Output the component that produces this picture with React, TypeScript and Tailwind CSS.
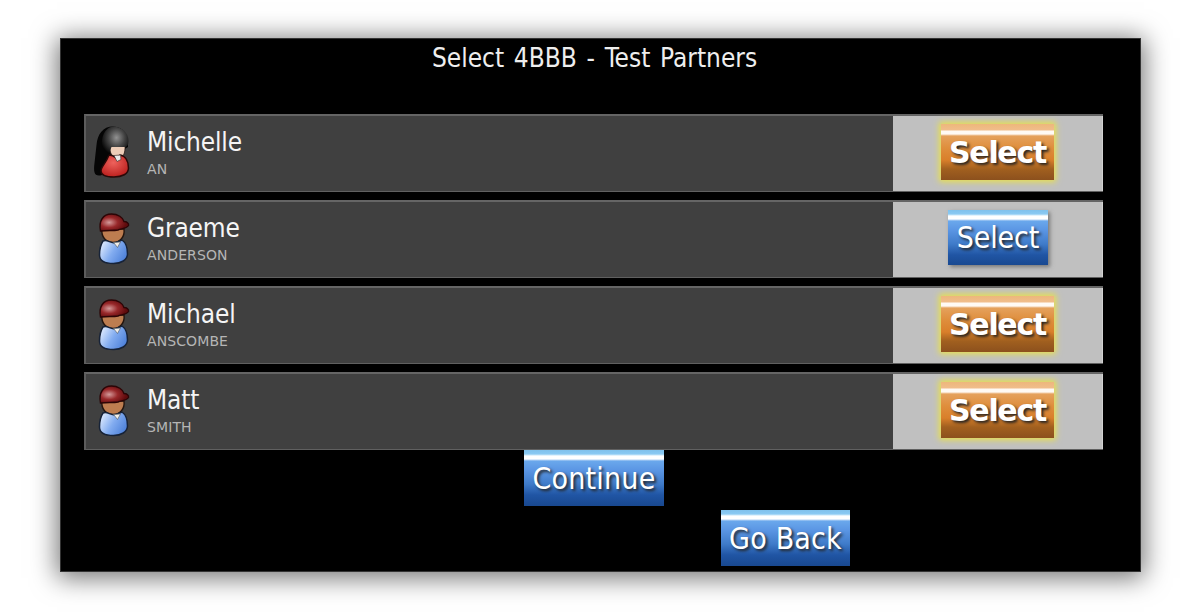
import clsx from 'clsx';

type Player = {
    first: string;
    last: string;
    gender: 'f' | 'm';
    selected: boolean;
};

const players: Player[] = [
    { first: 'Michelle', last: 'AN', gender: 'f', selected: true },
    { first: 'Graeme', last: 'ANDERSON', gender: 'm', selected: false },
    { first: 'Michael', last: 'ANSCOMBE', gender: 'm', selected: true },
    { first: 'Matt', last: 'SMITH', gender: 'm', selected: true },
];

function WomanIcon() {
    return (
        <svg width="40" height="56" viewBox="0 0 40 56" className="block">
            <defs>
                <radialGradient id="hair" cx="0.55" cy="0.38" r="0.6">
                    <stop offset="0" stopColor="#929292" />
                    <stop offset="0.5" stopColor="#454545" />
                    <stop offset="1" stopColor="#050505" />
                </radialGradient>
                <radialGradient id="dress" cx="0.45" cy="0.35" r="0.65">
                    <stop offset="0" stopColor="#ee625c" />
                    <stop offset="1" stopColor="#bd211f" />
                </radialGradient>
            </defs>
            <path d="M20 1.500C10 1.500 4.500 9 3.500 20L1.500 38C0.500 46 1 50.500 6 50.500C14 50.500 22 40 22 30L35 22C36 10 30 1.500 20 1.500Z" fill="#050505" />
            <path d="M17 20H32C32.500 29 30 33 25 33C20 33 16 29 17 20Z" fill="#edcdb8" stroke="#241713" strokeWidth="0.8" />
            <path d="M16 30C19 30 21 31 23 33L27 30C33 31 35.500 37 35.500 43C35.500 49 29 52 21 52C13 52 8 50 8 46C8 42 13 38 16 30Z" fill="url(#dress)" stroke="#2a0908" strokeWidth="1.500" />
            <path d="M21 30.500L24 36.500L28 34.500L27.500 30Z" fill="#e9e9e9" stroke="#453532" strokeWidth="0.7" />
            <path d="M20 1.500C29 1.500 35.500 8 35.500 16C35.500 20 34 22 31 22H18.500C17 25 17 28 15 31C10 28 8 23 9 15C10 8 14 2 20 1.500Z" fill="url(#hair)" />
        </svg>
    );
}

function ManIcon({ id }: { id: string }) {
    return (
        <svg width="40" height="56" viewBox="0 0 40 56" className="block">
            <defs>
                <radialGradient id={`cap-${id}`} cx="0.32" cy="0.5" r="0.6">
                    <stop offset="0" stopColor="#d49a9a" />
                    <stop offset="0.5" stopColor="#98282a" />
                    <stop offset="1" stopColor="#5f0b0d" />
                </radialGradient>
                <linearGradient id={`shirt-${id}`} x1="0" y1="0.2" x2="1" y2="0.7">
                    <stop offset="0" stopColor="#e4eeff" />
                    <stop offset="0.5" stopColor="#82acf0" />
                    <stop offset="1" stopColor="#4b7fd9" />
                </linearGradient>
            </defs>
            <path d="M9 18C8 26 13 31.500 20 31.500C27 31.500 32 26 31 18Z" fill="#bd7d50" stroke="#24150e" strokeWidth="1.400" />
            <path d="M10 30C14 28 17 32 22 32L29 29C33.500 32 34.500 38 34.500 43C34.500 49 28 52.500 20.500 52.500C12 52.500 6.500 50 6.500 44C6.500 38 8 33 10 30Z" fill={`url(#shirt-${id})`} stroke="#172338" strokeWidth="1.500" />
            <path d="M20.500 31.500L24.500 36.500L27.500 31Z" fill="#f3efe8" stroke="#59616d" strokeWidth="0.7" />
            <path d="M7.500 20C5.500 10 10 3 18.500 3C25 3 30 6.500 31 10.500C34 10.500 36 12.500 35.500 14.500C34 17.500 29 17.500 25 19C20 20 14 19 7.500 20Z" fill={`url(#cap-${id})`} stroke="#2b0506" strokeWidth="1.400" />
        </svg>
    );
}

const blue =
    'bg-[linear-gradient(180deg,#80c1ec_0px,#8bcaf3_4px,#ffffff_6px,#ffffff_9px,#6aa8ec_11px,#5b96e4_20px,#3f7bc9_34px,#2055a4_45px,#194991_55px)]';
const orange =
    'bg-[linear-gradient(180deg,#edb77b_0px,#f0bd8b_6px,#fffaf4_7px,#fffaf4_10px,#e5a15c_12px,#df8e3c_24px,#d97f2a_36px,#a1601f_45px,#8c501d_56px)]';

function SelectButton({ selected }: { selected: boolean }) {
    return (
        <button
            className={clsx(
                'flex shrink-0 items-center justify-center text-[30px] text-white whitespace-nowrap [text-shadow:2px_2px_3px_#222222]',
                selected
                    ? "h-[56px] w-[113px] pt-px font-['DejaVu_Sans',sans-serif] font-bold tracking-[-1.3px] [font-stretch:normal] shadow-[0_0_6px_2px_#e8e04c] " + orange
                    : 'h-[55px] w-[100px] pt-px pl-px tracking-[-0.1px] shadow-[2px_2px_4px_#777777] ' + blue,
            )}
        >
            Select
        </button>
    );
}

function PlayerRow({ player }: { player: Player }) {
    return (
        <div className="flex h-[78px] border-t-2 border-l-2 border-b border-t-[#656565] border-l-[#5c5c5c] border-b-[#606060] bg-[#404040]">
            <div className="flex w-[807px] shrink-0 pt-[9px] pl-[7px]">
                {player.gender === 'f' ? <WomanIcon /> : <ManIcon id={player.last} />}
                <div className="pl-[14px]">
                    <div className="-mt-px h-[36px] text-[26px] leading-[36px] tracking-[-0.15px] text-[#f5f5f5]">{player.first}</div>
                    <div className="pt-px font-['DejaVu_Sans',sans-serif] text-[14px] leading-[17px] tracking-[0.1px] text-[#b5b5b5] [font-stretch:normal]">
                        {player.last}
                    </div>
                </div>
            </div>
            <div className="flex flex-1 items-start justify-center border-r border-[#d2d2d2] bg-[#c0c0c0] pt-[7.5px]">
                <SelectButton selected={player.selected} />
            </div>
        </div>
    );
}

export default function App() {
    return (
        <div className="h-[612px] w-[1190px] overflow-hidden bg-white pt-[38px] pl-[60px] font-['DejaVu_Sans_Condensed','DejaVu_Sans',sans-serif] [font-stretch:condensed]">
            <main className="flex h-[534px] w-[1081px] flex-col border border-[#333333] bg-black pl-[23px] shadow-[0_3px_24px_3px_rgba(0,0,0,0.55)]">
                <h1 className="-ml-[23px] h-[75px] pr-[12px] text-center text-[26px] leading-[38px] [word-spacing:2.3px] text-[#eeeeee]">
                    Select 4BBB - Test Partners
                </h1>
                <div className="flex w-[1019px] flex-col gap-2">
                    {players.map((p) => (
                        <PlayerRow key={p.last} player={p} />
                    ))}
                </div>
                <button
                    className={clsx(
                        'ml-[440px] h-[56px] w-[140px] shrink-0 text-[30px] tracking-[0.2px] text-white [text-shadow:2px_2px_3px_#222222]',
                        blue,
                    )}
                >
                    Continue
                </button>
                <button
                    className={clsx(
                        'mt-1 ml-[637px] h-[56px] w-[129px] shrink-0 text-[30px] tracking-[0.2px] whitespace-nowrap text-white [text-shadow:2px_2px_3px_#222222]',
                        blue,
                    )}
                >
                    Go Back
                </button>
            </main>
        </div>
    );
}
